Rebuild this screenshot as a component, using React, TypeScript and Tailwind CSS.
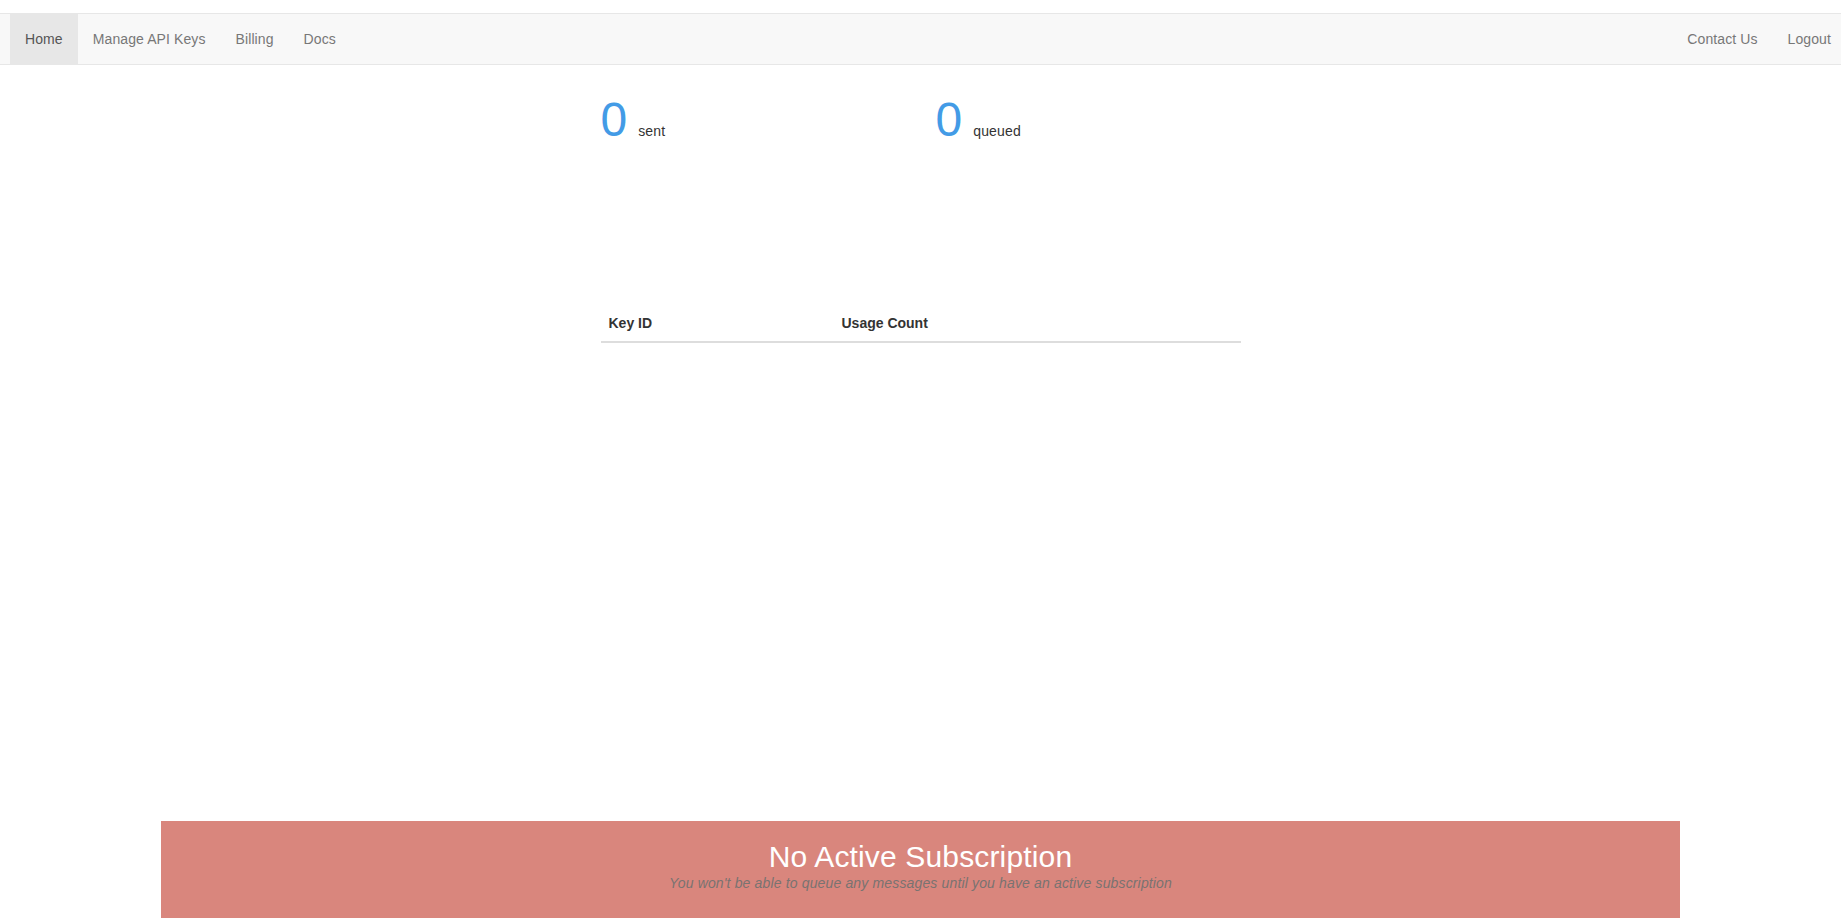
const navLinks = ['Home', 'Manage API Keys', 'Billing', 'Docs'];

const Stat = ({ value, label }: { value: number; label: string }) => (
  <div className="w-[335px] shrink-0 flex items-baseline gap-[11px]">
    <span className="text-[48px] leading-[52.8px] text-[#439be6]">{value}</span>
    <span className="text-[14px] leading-[20px] tracking-[0.15px] text-[#333]">{label}</span>
  </div>
);

export default function App() {
  return (
    <div className="w-full h-[918px] flex flex-col bg-white overflow-hidden font-['Liberation_Sans',Arial,sans-serif]">
      {/* Navbar */}
      <nav className="mt-[13px] h-[52px] flex border-y border-[#e7e7e7] bg-[#f8f8f8] pl-[10px] overflow-hidden">
        {navLinks.map((link, i) => (
          <a
            key={link}
            className={`px-[15px] py-[15px] text-[14px] leading-[20px] tracking-[0.1px] ${
              i === 0 ? 'bg-[#e7e7e7] text-[#555]' : 'text-[#777]'
            }`}
          >
            {link}
          </a>
        ))}
        <div className="ml-auto mr-[-5px] flex">
          <a className="px-[15px] py-[15px] text-[14px] leading-[20px] tracking-[0.1px] text-[#777]">Contact Us</a>
          <a className="px-[15px] py-[15px] text-[14px] leading-[20px] tracking-[0.1px] text-[#777]">Logout</a>
        </div>
      </nav>

      {/* Contenido */}
      <div className="w-[640px] mx-auto">
        <div className="mt-[29px] flex">
          <Stat value={0} label="sent" />
          <Stat value={0} label="queued" />
        </div>

        <table className="mt-[158px] w-[640px] border-collapse">
          <thead>
            <tr>
              <th className="w-[233px] px-[8px] py-[8px] text-left text-[14px] leading-[20px] font-bold text-[#333] border-b-2 border-[#ddd]">
                Key ID
              </th>
              <th className="px-[8px] py-[8px] text-left text-[14px] leading-[20px] font-bold text-[#333] border-b-2 border-[#ddd]">
                Usage Count
              </th>
            </tr>
          </thead>
          <tbody></tbody>
        </table>
      </div>

      {/* Aviso de suscripción */}
      <div className="mt-auto w-[1519px] h-[97px] mx-auto shrink-0 bg-[#d9867d] text-center pt-[19px]">
        <h3 className="text-[30px] leading-[33px] tracking-[0.15px] text-white">No Active Subscription</h3>
        <p className="text-[14px] leading-[20px] italic tracking-[0.15px] text-[#7a7371]">
          You won't be able to queue any messages until you have an active subscription
        </p>
      </div>
    </div>
  );
}
